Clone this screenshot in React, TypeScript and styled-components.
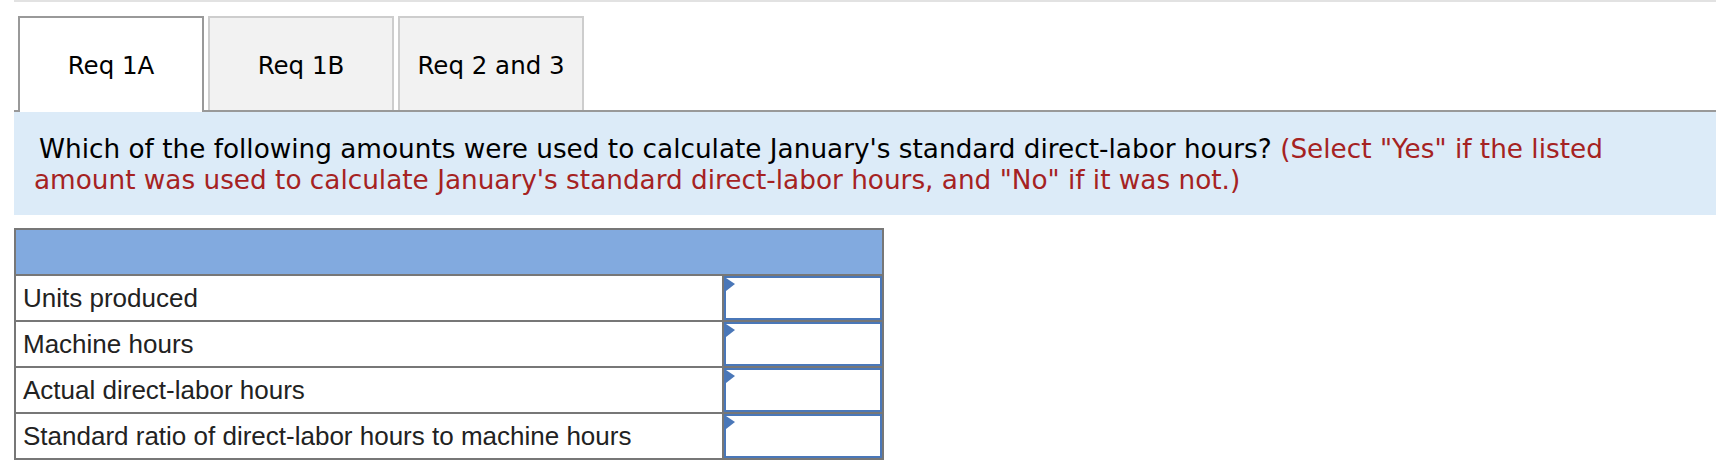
import styled, { createGlobalStyle } from "styled-components";

const Global = createGlobalStyle`
  html, body {
    margin: 0;
    padding: 0;
    background: #fff;
  }
`;

const Page = styled.div`
  width: 1702px;
  margin-left: 14px;
  border-top: 2px solid #e2e2e2;
`;

const TabBar = styled.div`
  display: flex;
  gap: 4px;
  padding: 14px 0 0 4px;
  border-bottom: 2px solid #999;
`;

const Tab = styled.div<{ $active?: boolean }>`
  width: 182px;
  height: 89px;
  display: flex;
  align-items: center;
  justify-content: center;
  box-sizing: content-box;
  padding-top: 3px;
  font-family: "DejaVu Sans", Verdana, sans-serif;
  font-size: 24.5px;
  color: #000;
  background: ${(p) => (p.$active ? "#fff" : "#f2f2f2")};
  border: 2px solid ${(p) => (p.$active ? "#999" : "#cdcdcd")};
  border-bottom: none;
  margin-bottom: ${(p) => (p.$active ? "-2px" : "0")};
  padding-bottom: ${(p) => (p.$active ? "2px" : "0")};
`;

const Question = styled.div`
  background: #dcebf8;
  padding: 22px 20px 19px 20px;
  font-family: "DejaVu Sans", Verdana, sans-serif;
  font-size: 26.3px;
  line-height: 31px;
  color: #000;
  text-indent: 5px;
`;

const Hint = styled.span`
  color: #a52222;
`;

const Grid = styled.div`
  width: 866px;
  margin-top: 13px;
  border: 2px solid #777;
`;

const Header = styled.div`
  height: 44px;
  background: #82aadf;
`;

const Row = styled.div`
  display: grid;
  grid-template-columns: 706px 158px;
  column-gap: 2px;
  background: #777;
  border-top: 2px solid #777;
`;

const Label = styled.div`
  height: 44px;
  background: #fff;
  display: flex;
  align-items: center;
  padding-left: 7px;
  font-family: "Liberation Sans", Arial, sans-serif;
  font-size: 26px;
  color: #222;
`;

const Answer = styled.div`
  position: relative;
  height: 44px;
  box-sizing: border-box;
  background: #fff;
  border: 2px solid #4a77b8;
`;

const Marker = styled.svg`
  position: absolute;
  left: 0;
  top: 0;
`;

const rows = [
  "Units produced",
  "Machine hours",
  "Actual direct-labor hours",
  "Standard ratio of direct-labor hours to machine hours",
];

export default function App() {
  return (
    <>
      <Global />
      <Page>
        <TabBar>
          <Tab $active>Req 1A</Tab>
          <Tab>Req 1B</Tab>
          <Tab>Req 2 and 3</Tab>
        </TabBar>
        <Question>
          Which of the following amounts were used to calculate January's standard direct-labor hours?{" "}
          <Hint>
            (Select "Yes" if the listed
            <br />
            amount was used to calculate January's standard direct-labor hours, and "No" if it was not.)
          </Hint>
        </Question>
        <Grid>
          <Header />
          {rows.map((r) => (
            <Row key={r}>
              <Label>{r}</Label>
              <Answer>
                <Marker width="10" height="14" viewBox="0 0 10 14">
                  <polygon points="0,0 9,6 0,13" fill="#4a77b8" />
                </Marker>
              </Answer>
            </Row>
          ))}
        </Grid>
      </Page>
    </>
  );
}
